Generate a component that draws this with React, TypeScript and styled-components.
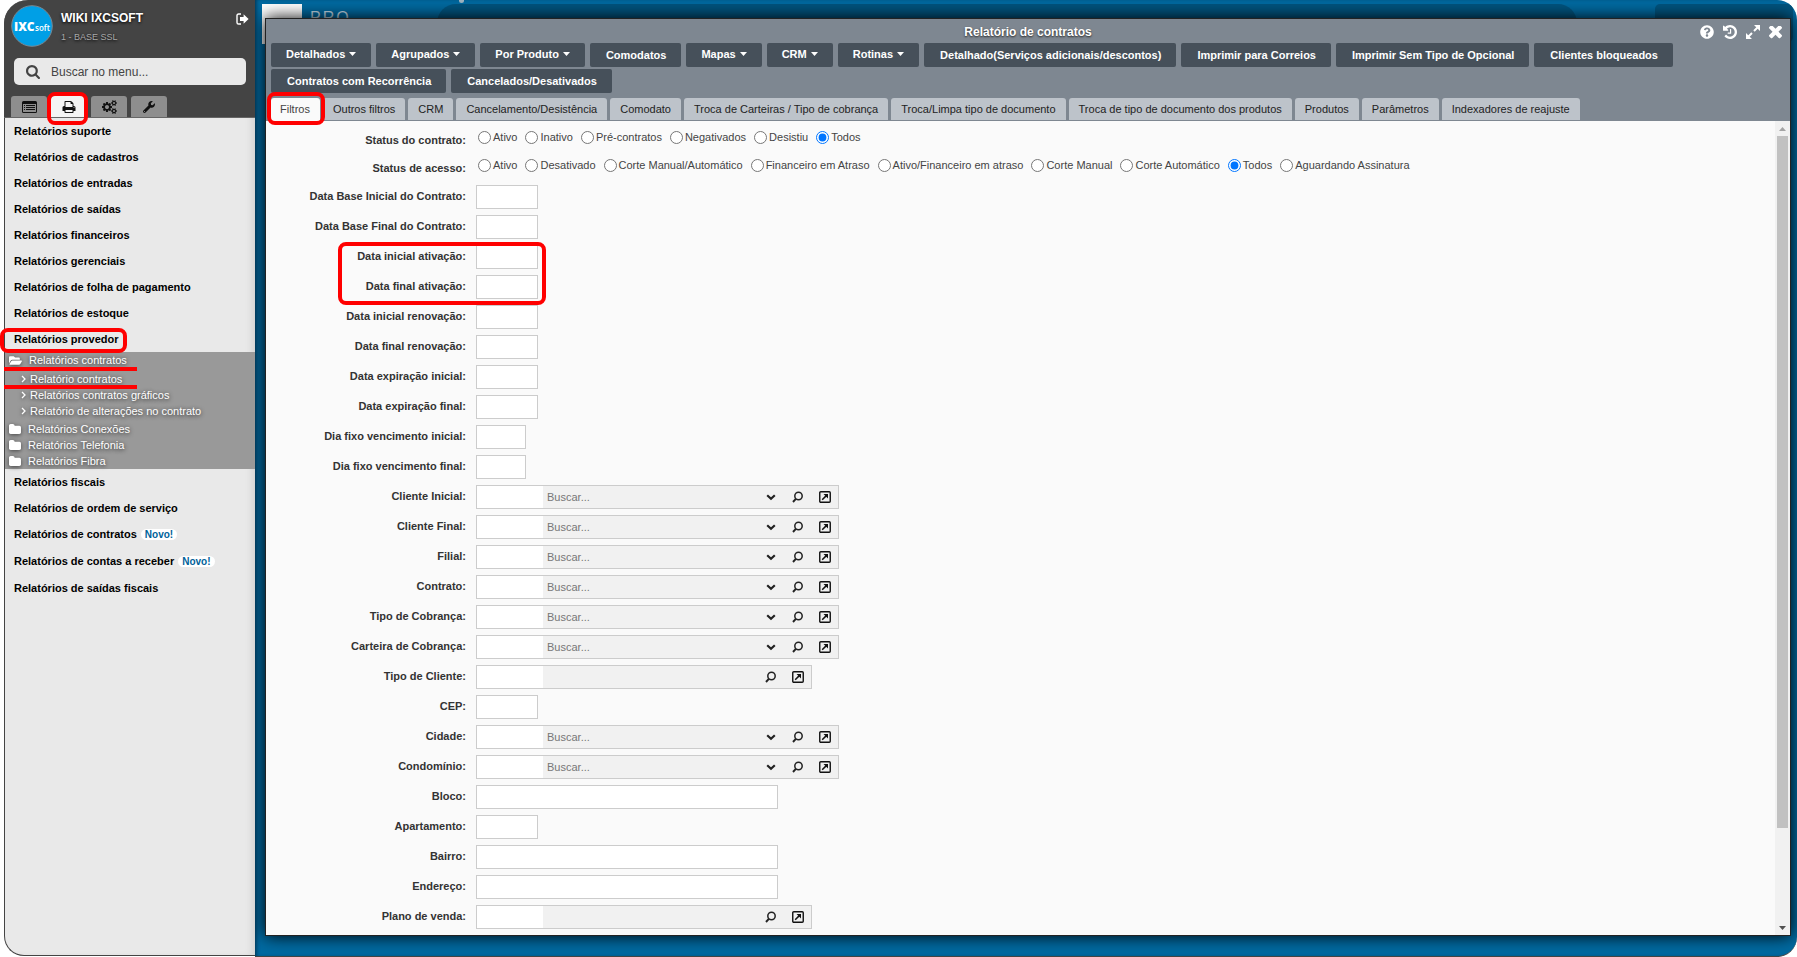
import React from "react";
import styled, { createGlobalStyle } from "styled-components";
import { FaWrench, FaFolderOpen, FaQuestionCircle } from "react-icons/fa";

const Global = createGlobalStyle`
  * { box-sizing: border-box; }
  body {
    margin: 0;
    background: #fff;
    font: 11px/16px "Liberation Sans", Arial, sans-serif;
    color: #444;
  }
  button, input { font: inherit; color: inherit; margin: 0; }
  button { cursor: pointer; }
  ul { list-style: none; margin: 0; padding: 0; }
  a { color: inherit; text-decoration: none; }
`;

const Shell = styled.div`
  display: flex;
  height: 100vh;
  margin-left: 4px;
  overflow: clip;
  overflow-clip-margin: 5px;
`;

/* ---------- sidebar ---------- */

const Sidebar = styled.aside`
  display: flex;
  flex-direction: column;
  flex: none;
  width: 251px;
  margin-bottom: 1px;
  background: #e9e9e9;
  border-left: 1px solid #444;
  border-bottom: 1px solid #444;
  border-radius: 24px 0 0 20px;
  box-shadow: inset -6px 0 8px -4px rgba(0, 0, 0, 0.12);
`;

const SideHead = styled.header`
  display: flex;
  flex-direction: column;
  flex: none;
  height: 118px;
  margin-left: -1px;
  padding: 5px 0 0 7px;
  background: #444;
  border-bottom: 1px solid #666;
  border-radius: 24px 0 0 0;
`;

const Profile = styled.div`
  display: flex;
  height: 53px;
  padding-right: 6px;
`;

const Names = styled.div`
  flex: 1;
  padding: 4px 0 0 8px;
  text-shadow: 0 1px 3px #000;
`;

const UserName = styled.div`
  font-size: 12px;
  line-height: 18px;
  font-weight: bold;
  color: #fff;
`;

const Company = styled.div`
  margin-top: 2px;
  font-size: 9px;
  line-height: 16px;
  color: #aaa;
`;

const IconButton = styled.button`
  display: flex;
  align-items: center;
  justify-content: center;
  height: 16px;
  padding: 0;
  border: 0;
  background: none;
  color: #fff;
`;

const LogoutButton = styled(IconButton)`
  margin-top: 6px;
`;

const SearchBox = styled.label`
  display: flex;
  align-items: center;
  gap: 11px;
  height: 27px;
  margin: 0 9px 11px 3px;
  padding-left: 12px;
  background: #e9e9e9;
  border-radius: 5px;
  color: #444;
`;

const SearchInput = styled.input`
  flex: 1;
  min-width: 0;
  height: 100%;
  padding: 0;
  border: 0;
  outline: 0;
  background: none;
  font-size: 12px;
  &::placeholder { color: #444; opacity: 1; }
`;

const SideTabs = styled.div`
  display: flex;
  gap: 4px;
`;

const SideTab = styled.button<{ $active?: boolean }>`
  position: relative;
  display: flex;
  align-items: center;
  justify-content: center;
  width: 36px;
  height: 21px;
  padding: 0;
  border: 0;
  border-radius: 3px 3px 0 0;
  background: ${(p) => (p.$active ? "#f4f4f4" : "#8e8e8e")};
  color: #111;
`;

const MenuItem = styled.li<{ $tall?: boolean }>`
  position: relative;
  height: ${(p) => (p.$tall ? "27px" : "26px")};
  padding: 5px 0 0 9px;
  font-weight: bold;
  color: #000;
`;

const Badge = styled.span`
  display: inline-block;
  margin-left: 4px;
  padding: 0 4px;
  border-radius: 6px;
  background: #fff;
  color: #00629a;
  font-size: 10px;
  line-height: 11px;
`;

const Submenu = styled.ul`
  position: relative;
  height: 117px;
  padding-left: 4px;
  background: #999;
  color: #fff;
  text-shadow: 0 1px 4px #222;
`;

const SubItem = styled.li`
  display: flex;
  align-items: center;
  gap: 7px;
  height: 16px;
  svg { filter: drop-shadow(0 1px 2px #444); }
`;

const SubLeafs = styled.ul`
  padding: 3px 0 2px 12px;
`;

const SubLeaf = styled(SubItem)`
  gap: 4px;
`;

/* ---------- highlight marks ---------- */

const Mark = styled.span<{ $t: number; $r?: number; $b: number; $l: number; $w?: number }>`
  position: absolute;
  z-index: 3;
  top: ${(p) => p.$t}px;
  bottom: ${(p) => p.$b}px;
  left: ${(p) => p.$l}px;
  ${(p) => (p.$w ? `width: ${p.$w}px;` : `right: ${p.$r}px;`)}
  border: 4px solid #f00;
  border-radius: 8px;
  pointer-events: none;
`;

const Underline = styled.span<{ $t: number }>`
  position: absolute;
  top: ${(p) => p.$t}px;
  left: -1px;
  width: 133px;
  height: 4px;
  background: #f00;
`;

/* ---------- desktop behind the window ---------- */

const Desktop = styled.main`
  position: relative;
  display: flex;
  flex: 1;
  min-width: 0;
  padding: 18px 6px 20px 10px;
  background: #006aa1;
  border-bottom: 1px solid #444;
  border-radius: 0 20px 20px 0;
  box-shadow: inset 3px 0 4px -2px #002f4a;
  overflow: hidden;
`;

const BackTile = styled.div`
  position: absolute;
  top: 4px;
  left: 7px;
  width: 40px;
  height: 40px;
  background: #fff;
`;

const BackTitle = styled.div`
  position: absolute;
  top: 8px;
  left: 55px;
  font-size: 16px;
  line-height: 20px;
  color: #c4dbe8;
  letter-spacing: 2px;
`;

const BackDot = styled.div`
  position: absolute;
  top: -2px;
  left: 204px;
  width: 5px;
  height: 5px;
  border-radius: 50%;
  background: #9fb4c0;
`;

const BackPanel = styled.div<{ $left: number; $right: number; $radius: number }>`
  position: absolute;
  top: 4px;
  left: ${(p) => p.$left}px;
  right: ${(p) => p.$right}px;
  height: 38px;
  border-radius: ${(p) => p.$radius}px;
  background: #00547f;
`;

/* ---------- window ---------- */

const Win = styled.section`
  position: relative;
  display: flex;
  flex-direction: column;
  flex: 1;
  min-width: 0;
  min-height: 0;
  border: 1px solid #222;
  background: #fafafa;
  box-shadow: 0 0 16px #000;
`;

const WinHead = styled.header`
  flex: none;
  background: #7e8791;
`;

const TitleBar = styled.div`
  position: relative;
  height: 24px;
  text-align: center;
`;

const Title = styled.h1`
  margin: 0;
  padding-top: 3px;
  font-size: 12px;
  line-height: 20px;
  color: #fff;
  text-shadow: 0 1px 2px #222;
`;

const WinControls = styled.div`
  position: absolute;
  top: 5px;
  right: 8px;
  display: flex;
  gap: 9px;
`;

const Toolbar = styled.div`
  display: flex;
  flex-wrap: wrap;
  gap: 2px 5px;
  padding: 0 5px 5px;
`;

const ToolButton = styled.button<{ $drop?: boolean }>`
  display: flex;
  align-items: center;
  gap: 4px;
  height: 24px;
  padding: ${(p) => (p.$drop ? "0 15px 2px" : "0 15px 0 16px")};
  border: 0;
  border-radius: 2px;
  background: #46505a;
  color: #fff;
  font-weight: bold;
`;

const Tabs = styled.div`
  display: flex;
  gap: 3px;
  padding: 0 5px;
`;

const Tab = styled.button<{ $active?: boolean }>`
  position: relative;
  height: 23px;
  padding: 0 10px 0 ${(p) => (p.$active ? "9px" : "10px")};
  border: 0;
  border-bottom: 1px solid ${(p) => (p.$active ? "#fafafa" : "#7e8791")};
  border-radius: 3px 3px 0 0;
  background: ${(p) => (p.$active ? "#fafafa" : "#bdc3ca")};
  color: ${(p) => (p.$active ? "#444" : "#222")};
`;

const Body = styled.div`
  display: flex;
  flex: 1;
  min-height: 0;
`;

const Form = styled.form`
  flex: 1;
  min-width: 0;
  padding-top: 1px;
  overflow: hidden;
`;

const Fields = styled.div`
  padding-top: 4px;
`;

const Row = styled.div<{ $radio?: boolean }>`
  display: grid;
  grid-template-columns: 200px 1fr;
  column-gap: 10px;
  height: ${(p) => (p.$radio ? "28px" : "30px")};
  padding-top: 3px;
`;

const Pair = styled.div`
  position: relative;
`;

const RowLabel = styled.label`
  padding-top: 3px;
  font-weight: bold;
  text-align: right;
  color: #333;
`;

const RadioCaption = styled(RowLabel)`
  padding-top: 7px;
`;

const Radios = styled.div`
  display: flex;
  gap: 8px;
  padding-left: 2px;
  height: 24px;
`;

const RadioLabel = styled.label`
  display: flex;
  align-items: center;
  gap: 2px;
`;

const Radio = styled.input`
  width: 13px;
  height: 13px;
`;

const TextInput = styled.input<{ $w: number }>`
  width: ${(p) => p.$w}px;
  height: 24px;
  padding: 0 4px;
  border: 1px solid #ccc;
  background: #fff;
`;

const Combo = styled.div`
  display: flex;
  justify-self: start;
  height: 24px;
  border: 1px solid #ccc;
  background: #f1f1f1;
`;

const CodeInput = styled.input`
  width: 66px;
  padding: 0 4px;
  border: 0;
  background: #fff;
`;

const LookupInput = styled.input`
  width: 214px;
  padding: 0 4px;
  border: 0;
  background: none;
  &::placeholder { color: #777; opacity: 1; }
`;

const ComboButton = styled(IconButton)`
  width: 27px;
  height: 22px;
  color: #222;
`;

const ScrollTrack = styled.div`
  display: flex;
  flex-direction: column;
  align-items: center;
  width: 15px;
  padding: 6px 0 5px;
  background: #f1f1f1;
`;

const ScrollThumb = styled.div`
  flex: 691;
  width: 11px;
  margin-top: 5px;
  background: #c1c1c1;
`;

const ScrollRest = styled.div`
  flex: 98;
`;

/* ---------- icons ---------- */

const Caret = () => (
  <svg width="7" height="4" viewBox="0 0 7 4"><path d="M0 0h7L3.5 4z" fill="#fff" /></svg>
);
const AngleRight = () => (
  <svg width="5" height="8" viewBox="0 0 5 8"><path d="M1 1l3 3-3 3" fill="none" stroke="#fff" strokeWidth="1.3" /></svg>
);
const Chevron = () => (
  <svg width="10" height="7" viewBox="0 0 10 7"><path d="M1.2 1.2L5 4.8l3.8-3.6" fill="none" stroke="#222" strokeWidth="2.2" /></svg>
);
const Lens = () => (
  <svg width="12" height="12" viewBox="0 0 12 12" fill="none" stroke="#222">
    <circle cx="6.5" cy="5" r="3.7" strokeWidth="1.5" /><path d="M3.8 7.8L1 11" strokeWidth="1.9" />
  </svg>
);
const OpenBox = () => (
  <svg width="12" height="12" viewBox="0 0 12 12" fill="none" stroke="#111">
    <rect x=".75" y=".75" width="10.5" height="10.5" rx="1" strokeWidth="1.4" />
    <path d="M3.2 8.8L7.6 4.4" strokeWidth="1.5" /><path d="M4.5 3h4.500v4.500z" fill="#111" stroke="none" />
  </svg>
);
const Logout = () => (
  <svg width="13" height="12" viewBox="0 0 13 12">
    <path d="M5 1H2.6Q1 1 1 2.6v6.8Q1 11 2.6 11H5" fill="none" stroke="#fff" strokeWidth="1.4" />
    <path d="M4 4h3.600V1.200L12.600 6l-5 4.800V8H4z" fill="#fff" />
  </svg>
);
const Expand = () => (
  <svg width="14" height="14" viewBox="0 0 14 14" fill="#fff" stroke="#fff">
    <path d="M8 0h6v6zM0 8v6h6z" stroke="none" /><path d="M11.5 2.5L8 6M2.5 11.5L6 8" strokeWidth="2" />
  </svg>
);
const ListIcon = () => (
  <svg width="15" height="12" viewBox="0 0 15 12">
    <path fillRule="evenodd" d="M1.5 0h12Q15 0 15 1.5v9q0 1.5-1.5 1.5h-12Q0 12 0 10.5v-9Q0 0 1.5 0zM1 3v7.500q0 .5.5.5h12q.5 0 .5-.5V3z" fill="#111" />
    <path d="M2 4.500h1M4 4.500h9M2 6.500h1M4 6.500h9M2 8.500h1M4 8.500h9" stroke="#111" />
  </svg>
);
const Search = () => (
  <svg width="14" height="14" viewBox="64 128 1664 1664" fill="currentColor">
    <path d="M1216 832q0-185-131.500-316.500t-316.500-131.500-316.500 131.500-131.500 316.500 131.500 316.500 316.500 131.500 316.500-131.500 131.500-316.500zm512 832q0 52-38 90t-90 38q-54 0-90-38l-343-342q-179 124-399 124-143 0-273.500-55.500t-225-150-150-225-55.500-273.500 55.500-273.500 150-225 225-150 273.500-55.500 273.500 55.500 225 150 150 225 55.500 273.500q0 220-124 399l343 343q37 37 37 90z" />
  </svg>
);
const Print = () => (
  <svg width="14" height="14" viewBox="0 0 1792 1792" fill="currentColor">
    <path d="M448 1536h896v-256h-896v256zm0-640h896v-384h-160q-40 0-68-28t-28-68v-160h-640v640zm1152 64q0-26-19-45t-45-19-45 19-19 45 19 45 45 19 45-19 19-45zm128 0v416q0 13-9.5 22.5t-22.5 9.5h-224v160q0 40-28 68t-68 28h-960q-40 0-68-28t-28-68v-160h-224q-13 0-22.5-9.5t-9.5-22.5v-416q0-79 56.5-135.5t135.5-56.5h64v-544q0-40 28-68t68-28h672q40 0 88 20t76 48l152 152q28 28 48 76t20 88v256h64q79 0 135.5 56.5t56.5 135.5z" />
  </svg>
);
const SMALL_COG =
  "v140q0 16-149 31-12 27-30 52 51 113 51 138 0 4-4 7-122 71-124 71-8 0-46-47t-52-68q-20 2-30 2t-30-2q-14 21-52 68t-46 47q-2 0-124-71-4-3-4-7 0-25 51-138-18-25-30-52-149-15-149-31v-140q0-16 149-31 13-29 30-52-51-113-51-138 0-4 4-7 4-2 35-20t59-34 30-16q8 0 46 46.5t52 67.5q20-2 30-2t30 2q51-71 92-112l6-2q4 0 124 70 4 3 4 7 0 25-51 138 17 23 30 52 149 15 149 31z";
const Cogs = () => (
  <svg width="15" height="14" viewBox="0 0 1920 1792" fill="currentColor">
    <path
      d={
        "M896 896q0-106-75-181t-181-75-181 75-75 181 75 181 181 75 181-75 75-181zm768 512q0-52-38-90t-90-38-90 38-38 90q0 53 37.5 90.5t90.5 37.5 90.5-37.5 37.5-90.5zm0-1024q0-52-38-90t-90-38-90 38-38 90q0 53 37.5 90.5t90.5 37.5 90.5-37.5 37.5-90.5zm-384 421v185q0 10-7 19.5t-16 10.5l-155 24q-11 35-32 76 34 48 90 115 7 11 7 20 0 12-7 19-23 30-82.5 89.5t-78.5 59.5q-11 0-21-7l-115-90q-37 19-77 31-11 108-23 155-7 24-30 24h-186q-11 0-20-7.5t-10-17.5l-23-153q-34-10-75-31l-118 89q-7 7-20 7-11 0-21-8-144-133-144-160 0-9 7-19 10-14 41-53t47-61q-23-44-35-82l-152-24q-10-1-17-9.5t-7-19.5v-185q0-10 7-19.5t16-10.5l155-24q11-35 32-76-34-48-90-115-7-11-7-20 0-12 7-20 22-30 82-89t79-59q11 0 21 7l115 90q34-18 77-32 11-108 23-154 7-24 30-24h186q11 0 20 7.5t10 17.5l23 153q34 10 75 31l118-89q8-7 20-7 11 0 21 8 144 133 144 160 0 8-7 19-12 16-42 54t-45 60q23 48 34 82l152 23q10 2 17 10.5t7 19.5z" +
        "M1920 1338" + SMALL_COG + "M1920 314" + SMALL_COG
      }
    />
  </svg>
);
const Folder = () => (
  <svg width="12" height="10" viewBox="64 128 1664 1408" preserveAspectRatio="none" fill="#fff">
    <path d="M1728 608v704q0 92-66 158t-158 66h-1216q-92 0-158-66t-66-158v-960q0-92 66-158t158-66h320q92 0 158 66t66 158v32h672q92 0 158 66t66 158z" />
  </svg>
);
const History = () => (
  <svg width="14" height="14" viewBox="128 128 1536 1536" fill="#fff">
    <path d="M1664 896q0 156-61 298t-164 245-245 164-298 61q-172 0-327-72.5t-264-204.5q-7-10-6.5-22.5t8.500-20.500l137-138q10-9 25-9 16 2 23 12 73 95 179 147t225 52q104 0 198.500-40.500t163.500-109.500 109.500-163.500 40.500-198.500-40.500-198.500-109.500-163.500-163.500-109.500-198.500-40.500q-98 0-188 35.500t-160 101.500l137 138q31 30 14 69-17 40-59 40h-448q-26 0-45-19t-19-45v-448q0-42 40-59 39-17 69 14l130 129q107-101 244.500-156.500t284.500-55.500q156 0 298 61t245 164 164 245 61 298zm-640-288v448q0 14-9 23t-23 9h-320q-14 0-23-9t-9-23v-64q0-14 9-23t23-9h224v-352q0-14 9-23t23-9h64q14 0 23 9t9 23z" />
  </svg>
);
const Close = () => (
  <svg width="13" height="13" viewBox="302 434 1188 1188" fill="#fff">
    <path d="M1490 1322q0 40-28 68l-136 136q-28 28-68 28t-68-28l-294-294-294 294q-28 28-68 28t-68-28l-136-136q-28-28-28-68t28-68l294-294-294-294q-28-28-28-68t28-68l136-136q28-28 68-28t68 28l294 294 294-294q28-28 68-28t68 28l136 136q28 28 28 68t-28 68l-294 294 294 294q28 28 28 68z" />
  </svg>
);
const Logo = () => (
  <svg width="42" height="42" viewBox="0 0 42 42">
    <circle cx="21" cy="21" r="20.3" fill="#009fe6" stroke="#7a8790" strokeWidth="1" />
    <text x="3" y="26" fontFamily="Open Sans, sans-serif" fontWeight="800" fontSize="12" fill="#fff">IXC</text>
    <text x="24" y="26" fontFamily="Open Sans, sans-serif" fontWeight="600" fontSize="8" fill="#fff">soft</text>
  </svg>
);

const before = ["Relatórios suporte", "Relatórios de cadastros", "Relatórios de entradas", "Relatórios de saídas", "Relatórios financeiros", "Relatórios gerenciais", "Relatórios de folha de pagamento", "Relatórios de estoque"];

const tools: [string, boolean?][] = [
  ["Detalhados", true], ["Agrupados", true], ["Por Produto", true], ["Comodatos"], ["Mapas", true], ["CRM", true], ["Rotinas", true],
  ["Detalhado(Serviços adicionais/descontos)"], ["Imprimir para Correios"], ["Imprimir Sem Tipo de Opcional"], ["Clientes bloqueados"],
  ["Contratos com Recorrência"], ["Cancelados/Desativados"],
];

const tabs = ["Filtros", "Outros filtros", "CRM", "Cancelamento/Desistência", "Comodato", "Troca de Carteiras / Tipo de cobrança", "Troca/Limpa tipo de documento", "Troca de tipo de documento dos produtos", "Produtos", "Parâmetros", "Indexadores de reajuste"];

type Kind = "date" | "day" | "long" | "combo" | "lookup";
const widths = { date: 62, day: 50, long: 302 };

const Field = ({ label, kind }: { label: string; kind: Kind }) => {
  const id = label.toLowerCase().replace(/\s+/g, "-");
  return (
    <Row>
      <RowLabel htmlFor={id}>{label}:</RowLabel>
      {kind === "combo" || kind === "lookup" ? (
        <Combo>
          <CodeInput id={id} />
          <LookupInput aria-label={label} placeholder={kind === "combo" ? "Buscar..." : ""} />
          {kind === "combo" && <ComboButton type="button" aria-label="Abrir lista"><Chevron /></ComboButton>}
          <ComboButton type="button" aria-label="Pesquisar"><Lens /></ComboButton>
          <ComboButton type="button" aria-label="Abrir cadastro"><OpenBox /></ComboButton>
        </Combo>
      ) : (
        <TextInput id={id} $w={widths[kind]} />
      )}
    </Row>
  );
};

const RadioRow = ({ caption, name, options }: { caption: string; name: string; options: string[] }) => (
  <Row $radio role="radiogroup" aria-labelledby={name}>
    <RadioCaption as="span" id={name}>{caption}:</RadioCaption>
    <Radios>
      {options.map((o) => (
        <RadioLabel key={o}><Radio type="radio" name={name} defaultChecked={o === "Todos"} />{o}</RadioLabel>
      ))}
    </Radios>
  </Row>
);

export default function App() {
  return (
    <>
      <Global />
      <Shell>
        <Sidebar>
          <SideHead>
            <Profile>
              <Logo />
              <Names>
                <UserName>WIKI IXCSOFT</UserName>
                <Company>1 - BASE SSL</Company>
              </Names>
              <LogoutButton aria-label="Sair"><Logout /></LogoutButton>
            </Profile>
            <SearchBox>
              <Search />
              <SearchInput aria-label="Buscar no menu" placeholder="Buscar no menu..." />
            </SearchBox>
            <SideTabs>
              <SideTab aria-label="Cadastros"><ListIcon /></SideTab>
              <SideTab $active aria-label="Relatórios"><Print /><Mark $t={-4} $b={-8} $l={-4} $r={-1} /></SideTab>
              <SideTab aria-label="Configurações"><Cogs /></SideTab>
              <SideTab aria-label="Ferramentas"><FaWrench size={12} /></SideTab>
            </SideTabs>
          </SideHead>
          <nav>
            <ul>
              {before.map((t) => <MenuItem key={t}><a href="#menu">{t}</a></MenuItem>)}
              <MenuItem><a href="#menu">Relatórios provedor</a><Mark $t={2} $b={-1} $l={-5} $w={127} /></MenuItem>
            </ul>
            <Submenu>
              <SubItem><FaFolderOpen size={13} /><a href="#menu">Relatórios contratos</a></SubItem>
              <SubLeafs>
                <SubLeaf><AngleRight /><a href="#menu">Relatório contratos</a></SubLeaf>
                <SubLeaf><AngleRight /><a href="#menu">Relatórios contratos gráficos</a></SubLeaf>
                <SubLeaf><AngleRight /><a href="#menu">Relatório de alterações no contrato</a></SubLeaf>
              </SubLeafs>
              <SubItem><Folder /><a href="#menu">Relatórios Conexões</a></SubItem>
              <SubItem><Folder /><a href="#menu">Relatórios Telefonia</a></SubItem>
              <SubItem><Folder /><a href="#menu">Relatórios Fibra</a></SubItem>
              <Underline $t={15} />
              <Underline $t={33} />
            </Submenu>
            <ul>
              <MenuItem><a href="#menu">Relatórios fiscais</a></MenuItem>
              <MenuItem><a href="#menu">Relatórios de ordem de serviço</a></MenuItem>
              <MenuItem $tall><a href="#menu">Relatórios de contratos</a><Badge>Novo!</Badge></MenuItem>
              <MenuItem $tall><a href="#menu">Relatórios de contas a receber</a><Badge>Novo!</Badge></MenuItem>
              <MenuItem><a href="#menu">Relatórios de saídas fiscais</a></MenuItem>
            </ul>
          </nav>
        </Sidebar>
        <Desktop>
          <BackTile />
          <BackTitle>PRO —</BackTitle>
          <BackDot />
          <BackPanel $left={182} $right={220} $radius={19} />
          <BackPanel $left={1400} $right={4} $radius={5} />
          <Win>
            <WinHead>
              <TitleBar>
                <Title>Relatório de contratos</Title>
                <WinControls>
                  <IconButton aria-label="Ajuda"><FaQuestionCircle size={14} /></IconButton>
                  <IconButton aria-label="Histórico"><History /></IconButton>
                  <IconButton aria-label="Maximizar"><Expand /></IconButton>
                  <IconButton aria-label="Fechar"><Close /></IconButton>
                </WinControls>
              </TitleBar>
              <Toolbar>
                {tools.map(([t, drop]) => <ToolButton key={t} $drop={drop}>{t}{drop && <Caret />}</ToolButton>)}
              </Toolbar>
              <Tabs role="tablist">
                {tabs.map((t, i) => (
                  <Tab key={t} role="tab" aria-selected={i === 0} $active={i === 0}>
                    {t}{i === 0 && <Mark $t={-6} $b={-5} $l={-4} $r={-5} />}
                  </Tab>
                ))}
              </Tabs>
            </WinHead>
            <Body>
              <Form>
                <RadioRow caption="Status do contrato" name="status-contrato" options={["Ativo", "Inativo", "Pré-contratos", "Negativados", "Desistiu", "Todos"]} />
                <RadioRow caption="Status de acesso" name="status-acesso" options={["Ativo", "Desativado", "Corte Manual/Automático", "Financeiro em Atraso", "Ativo/Financeiro em atraso", "Corte Manual", "Corte Automático", "Todos", "Aguardando Assinatura"]} />
                <Fields>
                  <Field label="Data Base Inicial do Contrato" kind="date" />
                  <Field label="Data Base Final do Contrato" kind="date" />
                  <Pair>
                    <Field label="Data inicial ativação" kind="date" />
                    <Field label="Data final ativação" kind="date" />
                    <Mark $t={0} $b={-3} $l={72} $w={208} />
                  </Pair>
                  <Field label="Data inicial renovação" kind="date" />
                  <Field label="Data final renovação" kind="date" />
                  <Field label="Data expiração inicial" kind="date" />
                  <Field label="Data expiração final" kind="date" />
                  <Field label="Dia fixo vencimento inicial" kind="day" />
                  <Field label="Dia fixo vencimento final" kind="day" />
                  <Field label="Cliente Inicial" kind="combo" />
                  <Field label="Cliente Final" kind="combo" />
                  <Field label="Filial" kind="combo" />
                  <Field label="Contrato" kind="combo" />
                  <Field label="Tipo de Cobrança" kind="combo" />
                  <Field label="Carteira de Cobrança" kind="combo" />
                  <Field label="Tipo de Cliente" kind="lookup" />
                  <Field label="CEP" kind="date" />
                  <Field label="Cidade" kind="combo" />
                  <Field label="Condomínio" kind="combo" />
                  <Field label="Bloco" kind="long" />
                  <Field label="Apartamento" kind="date" />
                  <Field label="Bairro" kind="long" />
                  <Field label="Endereço" kind="long" />
                  <Field label="Plano de venda" kind="lookup" />
                </Fields>
              </Form>
              <ScrollTrack>
                <svg width="7" height="4" viewBox="0 0 7 4"><path d="M0 4L3.500 0 7 4z" fill="#a3a3a3" /></svg>
                <ScrollThumb />
                <ScrollRest />
                <svg width="7" height="4" viewBox="0 0 7 4"><path d="M0 0h7L3.500 4z" fill="#505050" /></svg>
              </ScrollTrack>
            </Body>
          </Win>
        </Desktop>
      </Shell>
    </>
  );
}
